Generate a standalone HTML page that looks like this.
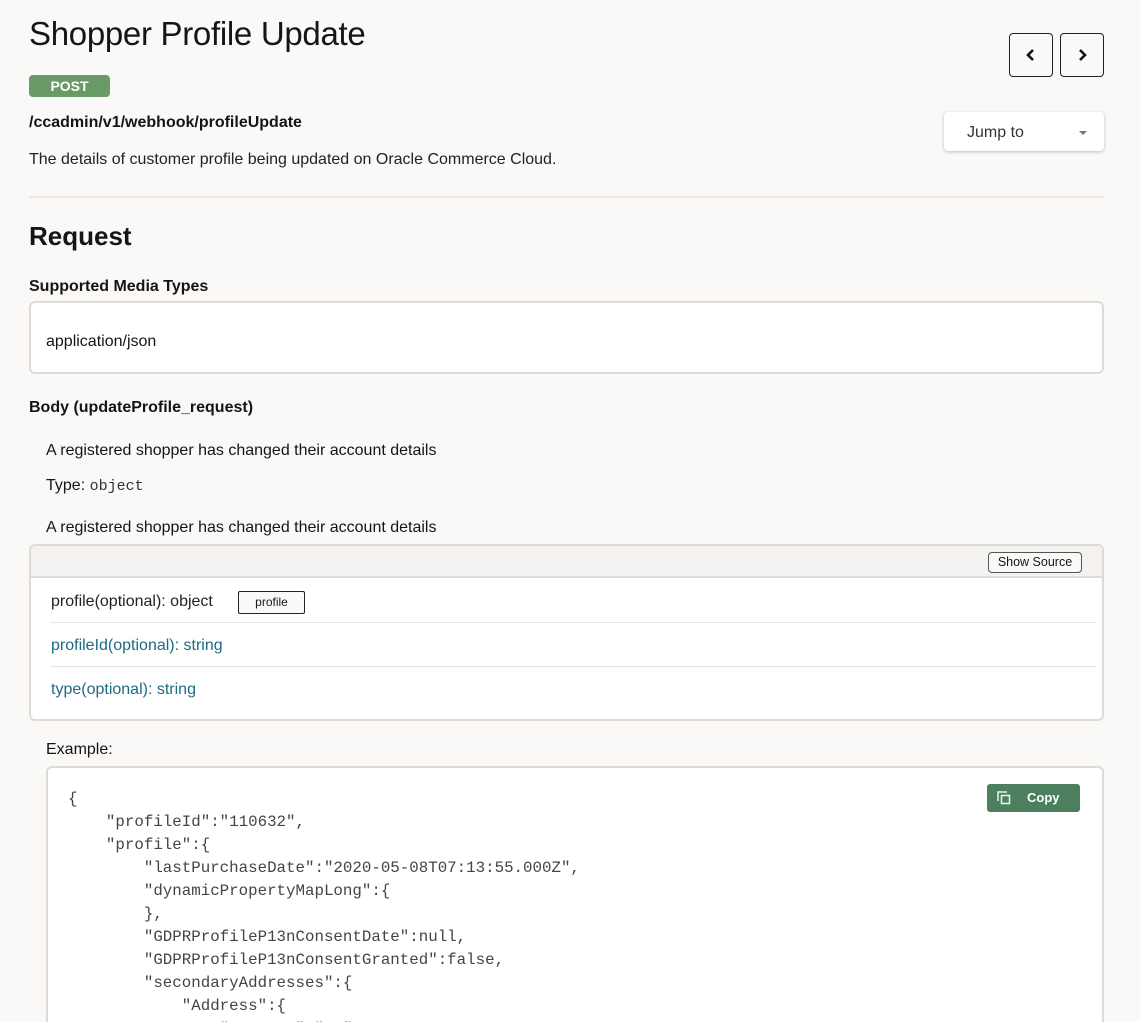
<!DOCTYPE html>
<html><head><meta charset="utf-8"><style>
*{box-sizing:border-box;margin:0;padding:0}
html,body{width:1140px;height:1022px;overflow:hidden}
body{background:#fbf9f8;font-family:"Liberation Sans",sans-serif;color:#161513;position:relative}
.a{position:absolute}
h1{position:absolute;left:29px;top:15px;font-size:33px;font-weight:400;letter-spacing:-0.3px}
.post{left:29px;top:75px;width:81px;height:22px;background:#6a9a65;border-radius:4px;color:#fff;font-weight:700;font-size:14px;text-align:center;line-height:22px}
.nav{top:33px;width:44px;height:44px;border:1px solid #222;border-radius:4px;background:#fbf9f8}
.nav svg{position:absolute;left:14px;top:14px}
.jump{left:944px;top:112px;width:160px;height:39px;background:#fff;border-radius:4px;box-shadow:0 1px 3px rgba(0,0,0,.25);font-size:16px;line-height:41px;padding-left:23px;color:#333}
.jump:after{content:"";position:absolute;right:17px;top:19px;border:4px solid transparent;border-top:4px solid #777}
.box{border:2px solid #dedbd7;border-radius:6px;background:#fff}
.row{position:absolute;left:20px;font-size:16px}
.blue{color:#1c6b84}
.code{font-family:"Liberation Mono",monospace;font-size:15.8px;color:#444;line-height:23px;white-space:pre;left:68px;top:788px}
</style></head><body>
<h1>Shopper Profile Update</h1>
<div class="a post">POST</div>
<div class="a" style="left:29px;top:114px;font-weight:700;font-size:16px">/ccadmin/v1/webhook/profileUpdate</div>
<div class="a" style="left:29px;top:151px;font-size:16px;color:#222">The details of customer profile being updated on Oracle Commerce Cloud.</div>
<div class="a nav" style="left:1009px"><svg width="14" height="14" viewBox="0 0 14 14"><path d="M9 2 L4 7 L9 12" fill="none" stroke="#111" stroke-width="2.6"/></svg></div>
<div class="a nav" style="left:1060px"><svg width="14" height="14" viewBox="0 0 14 14"><path d="M5 2 L10 7 L5 12" fill="none" stroke="#111" stroke-width="2.6"/></svg></div>
<div class="a jump">Jump to</div>
<div class="a" style="left:29px;top:196px;width:1075px;height:2px;background:#ebe8e4"></div>
<div class="a" style="left:29px;top:221px;font-size:26px;font-weight:700">Request</div>
<div class="a" style="left:29px;top:278px;font-size:16px;font-weight:700">Supported Media Types</div>
<div class="a box" style="left:29px;top:301px;width:1075px;height:73px"><div class="row" style="left:15px;top:30px">application/json</div></div>
<div class="a" style="left:29px;top:399px;font-size:16px;font-weight:700">Body (updateProfile_request)</div>
<div class="a" style="left:46px;top:442px;font-size:16px">A registered shopper has changed their account details</div>
<div class="a" style="left:46px;top:477px;font-size:16px">Type: <span style="font-family:'Liberation Mono',monospace;font-size:15px;color:#333">object</span></div>
<div class="a" style="left:46px;top:519px;font-size:16px">A registered shopper has changed their account details</div>
<div class="a box" style="left:29px;top:544px;width:1075px;height:177px">
 <div class="a" style="left:0;top:0;width:1071px;height:32px;background:#f4f2f0;border-bottom:2px solid #dedbd7;border-radius:4px 4px 0 0"></div>
 <div class="a" style="left:957px;top:6px;width:94px;height:21px;border:1px solid #555;border-radius:4px;font-size:12.5px;text-align:center;line-height:19px;background:#fbf9f8">Show Source</div>
 <div class="row" style="top:47px;color:#222">profile(optional): object</div>
 <div class="a" style="left:207px;top:45px;width:67px;height:23px;border:1px solid #222;border-radius:2px;font-size:12px;text-align:center;line-height:21px;background:#fbf9f8">profile</div>
 <div class="a" style="left:19px;top:76px;width:1046px;height:1px;background:#e6e3e0"></div>
 <div class="row blue" style="top:91px">profileId(optional): string</div>
 <div class="a" style="left:19px;top:120px;width:1046px;height:1px;background:#e6e3e0"></div>
 <div class="row blue" style="top:135px">type(optional): string</div>
</div>
<div class="a" style="left:46px;top:741px;font-size:16px">Example:</div>
<div class="a box" style="left:46px;top:766px;width:1058px;height:270px">
 <div class="a" style="left:939px;top:16px;width:93px;height:28px;background:#4b7f5d;border-radius:3px;color:#fff;font-size:13px;font-weight:700;line-height:28px;padding-left:40px">Copy
  <svg class="a" style="left:10px;top:7px" width="14" height="14" viewBox="0 0 14 14"><path d="M1 10V1h9" fill="none" stroke="#e8efe9" stroke-width="1.6"/><rect x="4.5" y="4.5" width="8" height="8" fill="none" stroke="#e8efe9" stroke-width="1.6"/></svg></div>
</div>
<div class="a code">{
    "profileId":"110632",
    "profile":{
        "lastPurchaseDate":"2020-05-08T07:13:55.000Z",
        "dynamicPropertyMapLong":{
        },
        "GDPRProfileP13nConsentDate":null,
        "GDPRProfileP13nConsentGranted":false,
        "secondaryAddresses":{
            "Address":{
                "country":"US",</div>
</body></html>
